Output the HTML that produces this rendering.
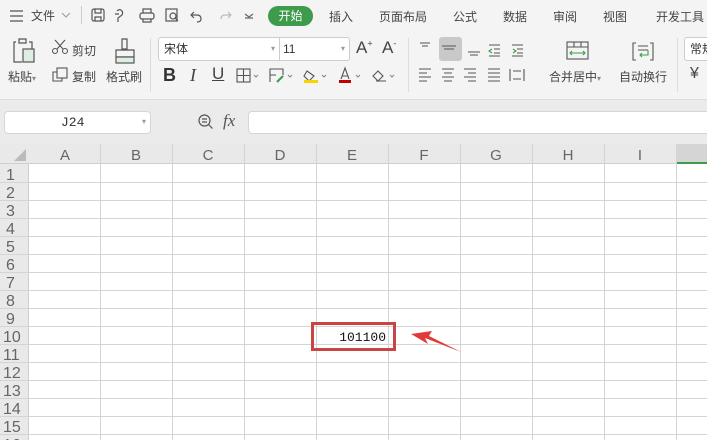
<!DOCTYPE html>
<html><head><meta charset="utf-8"><style>
*{margin:0;padding:0;box-sizing:border-box}
body{width:707px;height:440px;overflow:hidden;background:#fff;font-family:"Liberation Sans","Noto Sans CJK SC",sans-serif;position:relative;color:#333}
.a{position:absolute;white-space:nowrap}
.t{font-size:12px;color:#444}
svg{position:absolute;overflow:visible}
</style></head><body>
<div class="a" style="left:0;top:0;width:707px;height:100px;background:#f4f4f4;border-bottom:1px solid #ddd"></div>
<div class="a" style="left:0;top:100px;width:707px;height:44px;background:#ebebeb"></div>
<svg style="left:10px;top:10px" width="14" height="12"><path d="M0 1h13M0 6h13M0 11h13" stroke="#555" stroke-width="1.2"/></svg>
<div class="a t" style="left:31px;top:7px">文件</div>
<svg style="left:62px;top:13px" width="8" height="5"><path d="M0 0l4 4 4-4" stroke="#999" fill="none"/></svg>
<div class="a" style="left:81px;top:6px;width:1px;height:18px;background:#ccc"></div>
<svg style="left:92px;top:8px" width="160" height="16" fill="none" stroke="#555" stroke-width="1.2">
<rect x="0" y="1" width="12" height="12" rx="2"/><path d="M3 1v4h6V1M3 13V9h6v4"/>
<path d="M25 3c3-3 7 0 5 4l-4 3v4M27 6h-4"/>
<rect x="48" y="5" width="14" height="6" rx="2"/><path d="M51 5V1h8v4M51 11v3h8v-3"/>
<rect x="74" y="1" width="11" height="12"/><circle cx="81" cy="8" r="3"/><path d="M83 10l3 3"/>
<path d="M102 4l-3 3 3 3M99 7h6c3 0 4 2 4 4s-1 3-4 3"/>
<path d="M136 4l3 3-3 3M139 7h-6c-3 0-4 2-4 4" stroke="#bbb"/>
<path d="M153 6l4 3 4-3M153 10h8" stroke="#666"/>
</svg>
<div class="a" style="left:268px;top:6px;width:45px;height:20px;background:#3e9b4b;border-radius:10px;color:#fff;font-size:12px;text-align:center;line-height:20px">开始</div>
<div class="a t" style="left:329px;top:8px">插入</div>
<div class="a t" style="left:379px;top:8px">页面布局</div>
<div class="a t" style="left:453px;top:8px">公式</div>
<div class="a t" style="left:503px;top:8px">数据</div>
<div class="a t" style="left:553px;top:8px">审阅</div>
<div class="a t" style="left:603px;top:8px">视图</div>
<div class="a t" style="left:656px;top:8px">开发工具</div>
<svg style="left:13px;top:38px" width="24" height="26" fill="none" stroke="#555" stroke-width="1.2"><path d="M3 4h-2v20h8M6 1h7v4H6zM16 4h3v8"/><rect x="10" y="11" width="11" height="13" fill="#dfeee3"/></svg>
<div class="a t" style="left:8px;top:68px">粘贴<span style="font-size:8px;color:#888">▾</span></div>
<svg style="left:52px;top:40px" width="16" height="14" fill="none" stroke="#555" stroke-width="1.1"><circle cx="3" cy="11" r="2.5"/><circle cx="13" cy="11" r="2.5"/><path d="M5 9L13 0M11 9L3 0"/></svg>
<div class="a t" style="left:72px;top:42px">剪切</div>
<svg style="left:52px;top:67px" width="16" height="15" fill="none" stroke="#555" stroke-width="1.1"><rect x="5" y="1" width="10" height="10"/><path d="M5 5H1v9h9v-3"/></svg>
<div class="a t" style="left:72px;top:68px">复制</div>
<svg style="left:114px;top:38px" width="22" height="26" fill="none" stroke="#555" stroke-width="1.2"><path d="M8 1h5v10H8zM2 12h18v7H2z"/><rect x="2" y="19" width="18" height="6" fill="#dfeee3"/></svg>
<div class="a t" style="left:106px;top:68px">格式刷</div>
<div class="a" style="left:150px;top:38px;width:1px;height:54px;background:#ddd"></div>
<div class="a" style="left:158px;top:37px;width:122px;height:24px;border:1px solid #ccc;border-radius:3px 0 0 3px;background:#fff;font-size:12px;line-height:22px;padding-left:5px">宋体<span style="position:absolute;right:4px;color:#999;font-size:8px">▾</span></div>
<div class="a" style="left:280px;top:37px;width:70px;height:24px;border:1px solid #ccc;border-left:none;border-radius:0 3px 3px 0;background:#fff;font-size:12px;line-height:22px;padding-left:3px">11<span style="position:absolute;right:4px;color:#999;font-size:8px">▾</span></div>
<div class="a" style="left:356px;top:38px;font-size:17px;color:#444">A<sup style="font-size:9px">+</sup></div>
<div class="a" style="left:382px;top:38px;font-size:17px;color:#444">A<sup style="font-size:9px">-</sup></div>
<div class="a" style="left:163px;top:65px;font-size:18px;font-weight:bold;color:#333">B</div>
<div class="a" style="left:190px;top:65px;font-size:18px;font-style:italic;font-family:'Liberation Serif',serif;color:#444">I</div>
<div class="a" style="left:212px;top:64px;font-size:17px;text-decoration:underline;color:#444">U</div>
<svg style="left:237px;top:68px" width="160" height="16" fill="none" stroke="#555" stroke-width="1.1">
<rect x="0" y="1" width="13" height="13"/><path d="M6.5 1v13M0 7.5h13"/><path d="M17 7l2 2 2-2" stroke="#888"/>
<path d="M33 14V1h13v6M33 7h6" /><path d="M40 14l6-6" stroke="#3e9b4b" stroke-width="2"/><path d="M51 7l2 2 2-2" stroke="#888"/>
<path d="M70 3l7 5-5 5-5-5z"/><rect x="67" y="12" width="14" height="3" fill="#f5d400" stroke="none"/><path d="M85 7l2 2 2-2" stroke="#888"/>
<path d="M104 11l4-11 4 11M105 8h6"/><rect x="102" y="12" width="12" height="3" fill="#c00000" stroke="none"/><path d="M119 7l2 2 2-2" stroke="#888"/>
<path d="M136 8l5-5 5 5-5 5zM139 13h10"/><path d="M153 7l2 2 2-2" stroke="#888"/>
</svg>
<div class="a" style="left:408px;top:38px;width:1px;height:54px;background:#ddd"></div>
<div class="a" style="left:439px;top:37px;width:23px;height:24px;background:#c9c9c9;border-radius:3px"></div>
<svg style="left:418px;top:42px" width="118" height="40" fill="none" stroke="#555" stroke-width="1.1">
<path d="M2 1h10M4 4h6"/><path d="M24 4h14M26 7h10"/><path d="M50 10h12M52 13h8"/>
<path d="M71 3h11M76 7h6M76 11h6M71 14h11" /><path d="M74 7l-3 2 3 2" stroke="#3e9b4b"/>
<path d="M94 3h11M99 7h6M99 11h6M94 14h11"/><path d="M95 7l3 2-3 2" stroke="#3e9b4b"/>
<path d="M1 27h12M1 31h8M1 35h12M1 39h8"/><path d="M24 27h12M26 31h8M24 35h12M26 39h8"/><path d="M46 27h12M50 31h8M46 35h12M50 39h8"/><path d="M70 27h12M70 31h12M70 35h12M70 39h12"/><path d="M92 27v12M106 27v12M95 29h8M95 37h8"/>
</svg>
<svg style="left:566px;top:41px" width="24" height="20" fill="none" stroke="#3e9b4b" stroke-width="1.1"><rect x="1" y="1" width="21" height="17" stroke="#555"/><path d="M1 6h21M8 1v5M15 1v5" stroke="#555"/><path d="M4 12h15M6 10l-2 2 2 2M17 10l2 2-2 2"/></svg>
<div class="a t" style="left:549px;top:68px">合并居中<span style="font-size:8px;color:#888">▾</span></div>
<svg style="left:632px;top:42px" width="22" height="19" fill="none" stroke="#555" stroke-width="1.1"><path d="M4 1H1v17h3M18 1h3v17h-3M6 4h10M6 8h10"/><path d="M16 8v5H8M10 11l-2 2 2 2" stroke="#3e9b4b"/></svg>
<div class="a t" style="left:619px;top:68px">自动换行</div>
<div class="a" style="left:677px;top:38px;width:1px;height:54px;background:#ddd"></div>
<div class="a" style="left:684px;top:37px;width:30px;height:24px;border:1px solid #ccc;border-radius:3px;background:#fff;font-size:12px;line-height:22px;padding-left:5px">常规</div>
<div class="a" style="left:690px;top:65px;font-size:16px;color:#444">¥</div>
<div class="a" style="left:4px;top:111px;width:147px;height:23px;background:#fff;border:1px solid #d6d6d6;border-radius:4px;font-family:'Liberation Mono',monospace;font-size:13px;line-height:21px;padding-left:56px">J24<span style="position:absolute;right:4px;color:#999;font-size:8px">▾</span></div>
<svg style="left:198px;top:114px" width="16" height="16" fill="none" stroke="#555" stroke-width="1.2"><circle cx="6.5" cy="6.5" r="5.5"/><path d="M4 5h5M4 8h5M10.5 10.5l4 4"/></svg>
<div class="a" style="left:223px;top:111px;font-family:'Liberation Serif',serif;font-style:italic;font-size:17px;color:#555">fx</div>
<div class="a" style="left:248px;top:111px;width:470px;height:23px;background:#fff;border:1px solid #d6d6d6;border-radius:4px"></div>
<div class="a" style="left:0;top:144px;width:707px;height:20px;background:#e9e9e9;border-bottom:1px solid #cfcfcf"></div>
<div class="a" style="left:0;top:164px;width:29px;height:276px;background:#e9e9e9;border-right:1px solid #cfcfcf"></div>
<div class="a" style="left:677px;top:144px;width:30px;height:20px;background:#d5d5d5;border-bottom:2px solid #3e9b4b"></div>
<svg style="left:14px;top:149px" width="12" height="12"><path d="M12 0V12H0z" fill="#bbb"/></svg>
<svg style="left:0;top:0" width="707" height="440">
<g stroke="#d4d4d4" stroke-width="1">
<path d="M100.5 144V440M172.5 144V440M244.5 144V440M316.5 144V440M388.5 144V440M460.5 144V440M532.5 144V440M604.5 144V440M676.5 144V440"/>
<path d="M0 182.5H707M0 200.5H707M0 218.5H707M0 236.5H707M0 254.5H707M0 272.5H707M0 290.5H707M0 308.5H707M0 326.5H707M0 344.5H707M0 362.5H707M0 380.5H707M0 398.5H707M0 416.5H707M0 434.5H707"/>
</g>
<g font-family="Liberation Sans" font-size="15" fill="#666" text-anchor="middle">
<text x="65" y="160">A</text><text x="136" y="160">B</text><text x="208" y="160">C</text><text x="280" y="160">D</text><text x="352" y="160">E</text><text x="424" y="160">F</text><text x="496" y="160">G</text><text x="568" y="160">H</text><text x="640" y="160">I</text>
</g>
<g font-family="Liberation Sans" font-size="16" fill="#666">
<text x="6" y="180">1</text><text x="6" y="198">2</text><text x="6" y="216">3</text><text x="6" y="234">4</text><text x="6" y="252">5</text><text x="6" y="270">6</text><text x="6" y="288">7</text><text x="6" y="306">8</text><text x="6" y="324">9</text><text x="3" y="342">10</text><text x="3" y="360">11</text><text x="3" y="378">12</text><text x="3" y="396">13</text><text x="3" y="414">14</text><text x="3" y="432">15</text><text x="3" y="450">16</text>
</g>
<text x="386" y="341" font-family="Liberation Mono" font-size="13" fill="#111" text-anchor="end">101100</text>
<rect x="312.5" y="323.5" width="82" height="26" fill="none" stroke="#c94444" stroke-width="3"/>
<path d="M461 352L425 338L428 344L411 334L432 331L429 336Z" fill="#e03a3a"/>
</svg>
</body></html>
